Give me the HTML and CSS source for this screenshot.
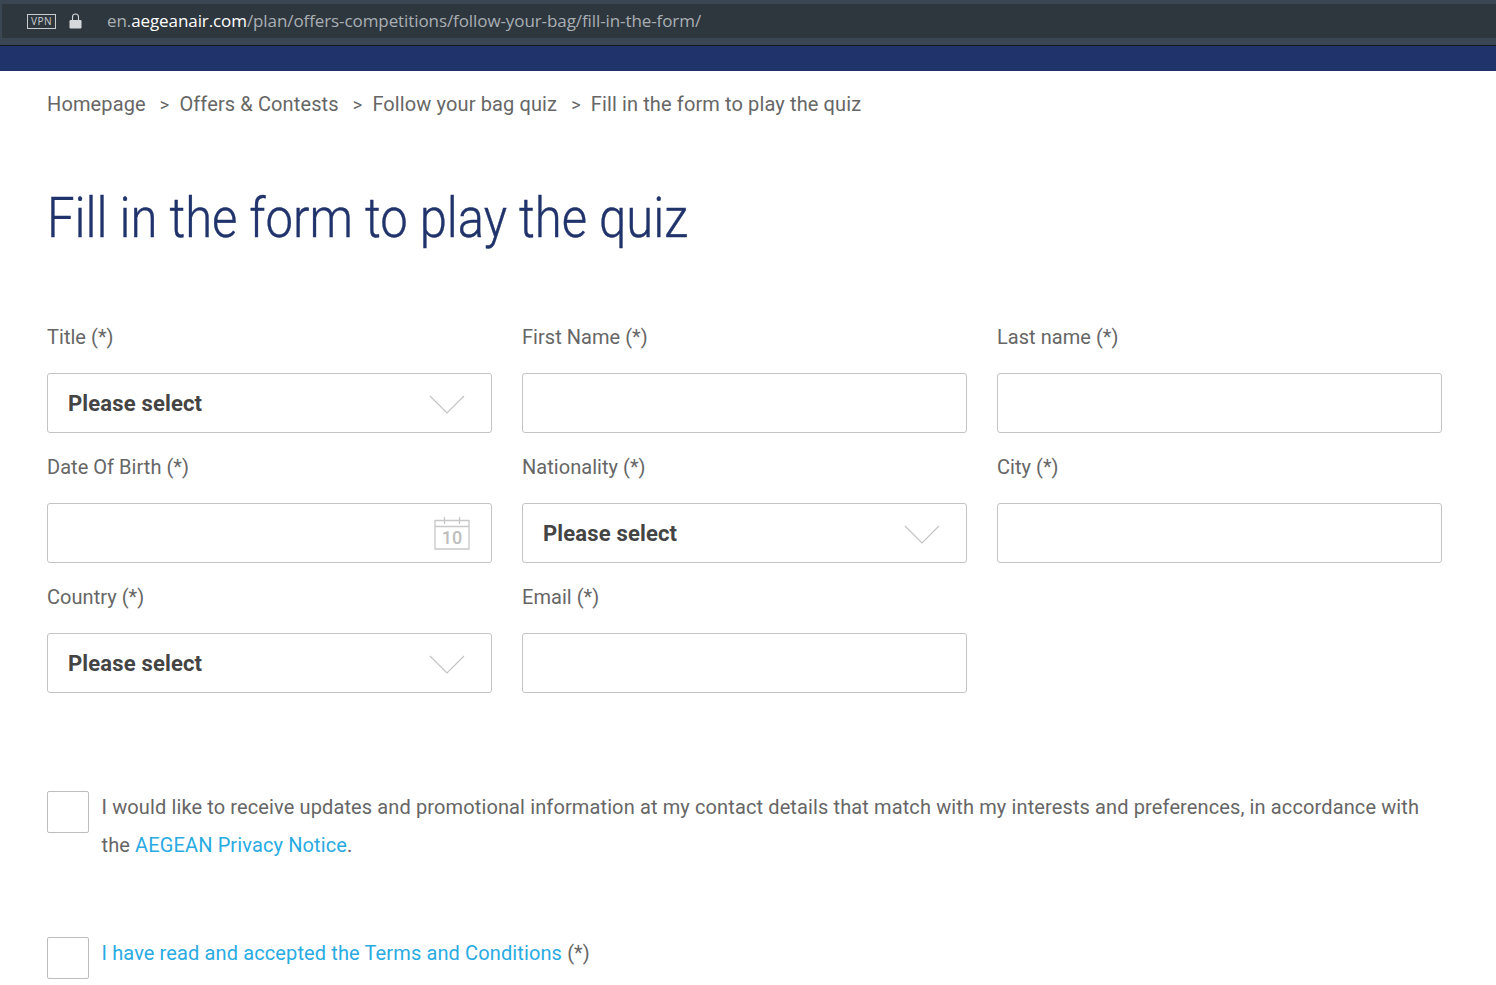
FILE: index.html
```html
<!DOCTYPE html>
<html lang="en">
<head>
    <meta charset="UTF-8">
    <meta name="viewport" content="width=device-width, initial-scale=1.0">
    <title>Fill in the form to play the quiz</title>
    <link rel="stylesheet" href="styles.css">
</head>
<body>
    <div class="browser-bar">
        <div class="address">
            <span class="vpn">VPN</span>
            <svg class="lock" width="13" height="16" viewBox="0 0 13 16"><path d="M3.500 7V4a3 3 0 0 1 6 0V7" fill="none" stroke="#d5d9dc" stroke-width="1.100"/><rect x="0.500" y="7" width="12" height="8.500" rx="1.200" fill="#d5d9dc"/></svg>
            <span class="url">en.<b>aegeanair.com</b>/plan/offers-competitions/follow-your-bag/fill-in-the-form/</span>
        </div>
    </div>
    <div class="top-strip"></div>

    <div class="container">
        <nav class="breadcrumb">
            <a>Homepage</a><span class="sep">&gt;</span>
            <a>Offers &amp; Contests</a><span class="sep">&gt;</span>
            <a>Follow your bag quiz</a><span class="sep">&gt;</span>
            <a>Fill in the form to play the quiz</a>
        </nav>

        <h1>Fill in the form to play the quiz</h1>

        <form class="quiz-form">
            <div class="field">
                <label>Title (*)</label>
                <div class="box select">Please select
                    <svg class="chevron" width="36" height="20" viewBox="0 0 36 20"><path d="M1 1l17 17L35 1" fill="none" stroke="#c4c4c4" stroke-width="1.200"/></svg>
                </div>
            </div>
            <div class="field">
                <label>First Name (*)</label>
                <div class="box"></div>
            </div>
            <div class="field">
                <label>Last name (*)</label>
                <div class="box"></div>
            </div>

            <div class="field">
                <label>Date Of Birth (*)</label>
                <div class="box date">
                    <svg class="calendar" width="36" height="34" viewBox="0 0 36 34"><path d="M1 4.500h34v28.500H1zM1 10.500h34M10.500 1v7M25.500 1v7" fill="none" stroke="#c8c8c8" stroke-width="1.300"/><text x="18" y="28" text-anchor="middle" class="calendar-day">10</text></svg>
                </div>
            </div>
            <div class="field">
                <label>Nationality (*)</label>
                <div class="box select">Please select
                    <svg class="chevron" width="36" height="20" viewBox="0 0 36 20"><path d="M1 1l17 17L35 1" fill="none" stroke="#c4c4c4" stroke-width="1.200"/></svg>
                </div>
            </div>
            <div class="field">
                <label>City (*)</label>
                <div class="box"></div>
            </div>

            <div class="field">
                <label>Country (*)</label>
                <div class="box select">Please select
                    <svg class="chevron" width="36" height="20" viewBox="0 0 36 20"><path d="M1 1l17 17L35 1" fill="none" stroke="#c4c4c4" stroke-width="1.200"/></svg>
                </div>
            </div>
            <div class="field">
                <label>Email (*)</label>
                <div class="box"></div>
            </div>
        </form>

        <div class="check-row updates">
            <span class="checkbox"></span>
            <p>I would like to receive updates and promotional information at my contact details that match with my interests and preferences, in accordance with the <a>AEGEAN Privacy Notice</a>.</p>
        </div>
        <div class="check-row terms">
            <span class="checkbox"></span>
            <p><a>I have read and accepted the Terms and Conditions</a> (*)</p>
        </div>
    </div>
</body>
</html>
```

FILE: styles.css
```css
html, body {
    height: 985px;
    overflow: hidden;
}
body {
    margin: 0;
    font-family: Roboto, "Liberation Sans", sans-serif;
    color: #666;
    background: #fff;
}
.browser-bar {
    height: 46px;
    box-sizing: border-box;
    padding: 4px 0 7px 2px;
    background: #3a4753;
    border-bottom: 1px solid #14181c;
}
.address {
    height: 34px;
    display: flex;
    align-items: center;
    padding-left: 25px;
    background: #2f373e;
    font-family: "Open Sans", sans-serif;
}
.vpn {
    box-sizing: border-box;
    width: 29px;
    height: 15px;
    border: 1px solid #c9cdd0;
    color: #c9cdd0;
    font-size: 10px;
    line-height: 13px;
    text-align: center;
    letter-spacing: 0.5px;
}
.lock {
    margin-left: 13px;
}
.url {
    margin: -2px 0 0 25px;
    font-size: 17px;
    letter-spacing: -0.09px;
    color: #a9afb4;
}
.url b {
    font-weight: 400;
    color: #fff;
}
.top-strip {
    height: 25px;
    background: #20336b;
}
.container {
    padding: 0 54px 0 47px;
}
.breadcrumb {
    height: 66px;
    padding-top: 20px;
    box-sizing: border-box;
    font-size: 20px;
    line-height: 27px;
    letter-spacing: 0.12px;
    white-space: nowrap;
}
.breadcrumb .sep {
    margin: 0 5px 0 14px;
    font-size: 18px;
}
h1 {
    margin: 41px 0 0;
    height: 80px;
    font-weight: 300;
    font-size: 56px;
    line-height: 80px;
    color: #20336b;
    white-space: nowrap;
    /* the site's narrow heading font isn't available */
    -webkit-text-stroke: 0.4px #20336b;
    transform: scaleX(0.875);
    transform-origin: left center;
}
.quiz-form {
    margin-top: 65px;
    display: grid;
    grid-template-columns: repeat(3, 445px);
    column-gap: 30px;
    row-gap: 20px;
}
.field label {
    display: block;
    height: 50px;
    font-size: 20px;
    line-height: 28px;
    letter-spacing: 0.04px;
}
.box {
    box-sizing: border-box;
    height: 60px;
    border: 1px solid #c4c4c4;
    border-radius: 3px;
    display: flex;
    align-items: center;
    justify-content: space-between;
    padding: 0 26px 0 20px;
}
.select {
    font-size: 22px;
    font-weight: 700;
    letter-spacing: 0.16px;
    color: #444;
}
.chevron {
    margin-top: 4px;
}
.date {
    justify-content: flex-end;
    padding-right: 21px;
}
.calendar-day {
    font-family: Roboto, sans-serif;
    font-size: 18px;
    font-weight: 500;
    fill: #bdbdbd;
}
.check-row {
    display: flex;
    gap: 12.5px;
}
.checkbox {
    flex: none;
    box-sizing: border-box;
    width: 42px;
    height: 42px;
    border: 1px solid #bdbdbd;
    border-radius: 2px;
}
.check-row p {
    margin: -3px 0 0;
    font-size: 20px;
    line-height: 38px;
    letter-spacing: 0.12px;
}
.check-row a {
    color: #29abe2;
}
.updates {
    margin-top: 98px;
}
.terms {
    margin-top: 73px;
}
```
